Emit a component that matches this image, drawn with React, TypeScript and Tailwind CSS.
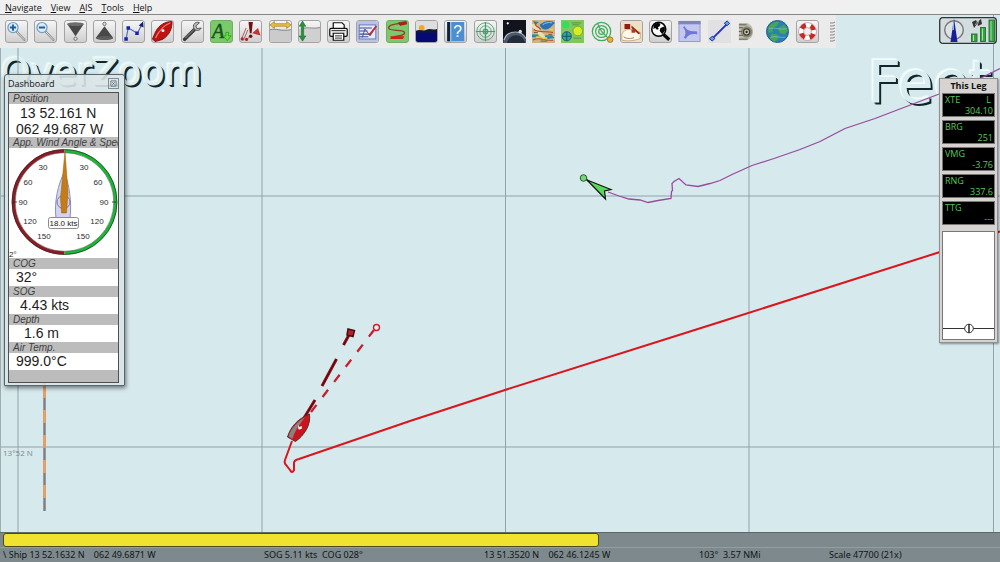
import React from 'react';
import clsx from 'clsx';

type Tone = 'plain' | 'green' | 'bare';

interface Tool {
  label: string;
  tone: Tone;
  art: React.ReactNode;
}

const TONES: Record<Tone, string> = {
  plain: 'rounded-[3px] border border-[#a3a3a3] bg-linear-to-b from-[#f6f6f6] to-[#cfcfcf]',
  green: 'rounded-[3px] border border-[#6fae62] bg-[#7cc96c]',
  bare: '',
};

const lens = (
  <>
    <path d="M12 12 21 21.500" stroke="#8b8b8b" strokeWidth="2.600" strokeLinecap="round" />
    <path d="M12 12 21 21.500" stroke="#e8e8e8" strokeWidth="1" />
    <circle cx="8" cy="7.500" r="5.800" fill="#dcebf5" stroke="#6fa0c6" strokeWidth="1.400" />
  </>
);

const TOOLS: Tool[] = [
  { label: 'Zoom in', tone: 'plain', art: <>{lens}<path d="M8 4v7M4.500 7.500h7" stroke="#1d5f9c" strokeWidth="2.200" /></> },
  { label: 'Zoom out', tone: 'plain', art: <>{lens}<path d="M4.500 7.500h7" stroke="#1d5f9c" strokeWidth="2.400" /></> },
  {
    label: 'Larger scale chart',
    tone: 'plain',
    art: (
      <>
        <path d="M2.500 3.500 12 17.500 21.500 3.500Z" fill="#484848" />
        <ellipse cx="12" cy="3.500" rx="9.500" ry="2.200" fill="#6e6e6e" />
        <circle cx="12" cy="20.300" r="1.900" fill="#ddd" stroke="#666" />
      </>
    ),
  },
  {
    label: 'Smaller scale chart',
    tone: 'plain',
    art: (
      <>
        <path d="M12 6 2 19.500h20Z" fill="#484848" />
        <ellipse cx="12" cy="19.500" rx="10" ry="2.300" fill="#5e5e5e" />
        <circle cx="12" cy="3.300" r="1.900" fill="#ddd" stroke="#666" />
      </>
    ),
  },
  {
    label: 'Create route',
    tone: 'plain',
    art: (
      <>
        <path d="M3.500 20.500 6 8 16.500 14 22 3" fill="none" stroke="#5567c9" strokeWidth="1.300" />
        <path d="m18 5 5-4.500.5 7Z" fill="#16216e" />
        <path d="M1.500 18.500h4v4h-4ZM4 6h4v4H4ZM14 12h4v4h-4Z" fill="#1523a8" />
      </>
    ),
  },
  {
    label: 'Auto follow',
    tone: 'plain',
    art: (
      <>
        <path d="M23 .5C15 .5 8 4.500 4 12.500L.5 20.500l3 3 8.500-2.500C20 16 23 9 23 .5Z" fill="#c11212" stroke="#7b0c0c" />
        <path d="M21 2C14 5 8 11 4 19.500" fill="none" stroke="#e97c74" strokeWidth="1.400" />
        <circle cx="12.500" cy="11" r="1.700" fill="#fff" />
      </>
    ),
  },
  {
    label: 'Options',
    tone: 'plain',
    art: (
      <>
        <path d="M3 21 14 10" stroke="#3c3c3c" strokeWidth="4" strokeLinecap="round" />
        <path d="M4 19.500 14 9.500" stroke="#989898" strokeWidth="1" />
        <path d="M20 2a4.700 4.700 0 1 0 2 6l-4.800.7-1.400-3Z" fill="#b9b9b9" stroke="#505050" />
      </>
    ),
  },
  {
    label: 'Show ENC text',
    tone: 'green',
    art: (
      <>
        <text x="1" y="19" fontSize="23" fontStyle="italic" fontFamily="'Liberation Serif', serif" fill="#17531b" stroke="#17531b" strokeWidth=".6">A</text>
        <path d="M17 13v4h-3l4.500 5.500L23 17h-3v-4Z" fill="#62e03c" stroke="#2d8c1e" strokeWidth=".8" />
      </>
    ),
  },
  {
    label: 'AIS targets',
    tone: 'plain',
    art: (
      <>
        <path d="M7 8 2 20M9 10 4 22M13 16l-5 5" stroke="#9f5151" />
        <path d="M9.700 1h5L13.200 14h-2Z" fill="#701010" />
        <path d="m14 14 6.500-6 3 8.500Z" fill="#c83232" />
        <circle cx="12.200" cy="17.500" r="2" fill="#701010" />
        <circle cx="2.500" cy="20.500" r="1.800" fill="#a62a2a" /><circle cx="7.500" cy="21" r="1.800" fill="#a62a2a" />
      </>
    ),
  },
  {
    label: 'Show currents',
    tone: 'plain',
    art: (
      <>
        <path d="M0 10c7-2 12 2 24 0v14H0Z" fill="#cbcbcb" />
        <path d="M0 10c7-2 12 2 24 0" fill="none" stroke="#777" />
        <path d="m0 4.500 5-4v2.600h14V.5l5 4-5 4V6H5v2.500Z" fill="#e9bd42" stroke="#a8811d" strokeWidth=".8" />
      </>
    ),
  },
  {
    label: 'Show tides',
    tone: 'plain',
    art: (
      <>
        <path d="M0 9c7-2 12 1 24-1v16H0Z" fill="#d0d0d0" />
        <path d="M4 8.500c7-2 12 1 20-1" fill="none" stroke="#777" />
        <path d="m4 0 3.800 6H5.300v11h2.500L4 23 .2 17h2.500V6H.2Z" fill="#27913d" stroke="#156529" strokeWidth=".6" />
      </>
    ),
  },
  {
    label: 'Print chart',
    tone: 'plain',
    art: (
      <g stroke="#111" strokeWidth="1.400">
        <path d="M6 9V2h10l2.500 2.500V9" fill="#fff" />
        <rect x="2" y="8.500" width="20" height="9" rx="1.500" fill="#eee" />
        <path d="M4 11h16" strokeWidth="1" />
        <path d="M6 14h12v8H6Z" fill="#fff" />
        <path d="M8 17h8M8 19.500h8" strokeWidth="1" />
      </g>
    ),
  },
  {
    label: 'Route manager',
    tone: 'plain',
    art: (
      <>
        <rect width="24" height="24" fill="#bac3e4" />
        <rect x="2.500" y="4.500" width="19" height="16" fill="#e5e9f8" stroke="#5b6fb4" />
        <path d="M3 8h14M3 11.500h9M3 15h13M3 18h10" stroke="#3d4c8d" strokeWidth="1.200" />
        <path d="m6 19 3-10 6 8 7-11" fill="none" stroke="#4e4c80" />
        <path d="m14 16 8-10" stroke="#d32222" strokeWidth="2" />
      </>
    ),
  },
  {
    label: 'Track',
    tone: 'green',
    art: (
      <>
        <path d="M17 3C8 3 1 5 2 8.500s17 1 18 4.500-7 4-13 5" fill="none" stroke="#933b2c" strokeWidth="1.500" />
        <path d="m13 2 9-1.500.5 3L15 5Z" fill="#c81818" stroke="#701111" strokeWidth=".6" />
        <path d="M4 17.500h16l-2 3H4Z" fill="#dc1a1a" />
      </>
    ),
  },
  {
    label: 'Day and night colors',
    tone: 'plain',
    art: (
      <>
        <rect width="24" height="24" fill="#dedede" />
        <circle cx="6.500" cy="8" r="3.300" fill="#efaa22" />
        <path d="M0 11c5-2 8 1 12-1s7 1 12-1v14H0Z" fill="#15182c" />
        <path d="M0 13h24v11H0Z" fill="#080a73" />
      </>
    ),
  },
  {
    label: 'Help',
    tone: 'plain',
    art: (
      <>
        <path d="M2.500 1H22v22H2.500Z" fill="#4c8fd0" />
        <path d="M2.500 1H6v22H2.500Z" fill="#11213a" />
        <path d="M6 1h1.200v22H6Z" fill="#b8d6f0" />
        <text x="9.500" y="18" fontSize="18" fontFamily="'Liberation Sans', sans-serif" fill="#fff">?</text>
      </>
    ),
  },
  {
    label: 'Weather',
    tone: 'plain',
    art: (
      <g fill="none" stroke="#45a06c">
        <circle cx="12" cy="12" r="10" /><circle cx="12" cy="12" r="6.500" /><circle cx="12" cy="12" r="2.500" strokeWidth="1.600" />
        <path d="M12 1v22M1 12h22" strokeWidth="1.300" />
      </g>
    ),
  },
  {
    label: 'Celestial navigation',
    tone: 'bare',
    art: (
      <>
        <rect width="24" height="24" fill="#11131d" />
        <path d="M0 24c1-8 7-11 13-11s10 3 11 8v3Z" fill="#4d5868" />
        <path d="M1 21c2-6 7-8.500 12-8.500s9 3 11 7" fill="none" stroke="#aebccb" strokeWidth="1.200" />
        <path d="M4 24c2-6 6-8 10-8s8 3 9 8Z" fill="#252c39" />
        <circle cx="18" cy="12" r="1.800" fill="#fff" opacity=".85" /><circle cx="5" cy="3.500" r="1.200" fill="#fff" />
      </>
    ),
  },
  {
    label: 'Weather fax',
    tone: 'bare',
    art: (
      <>
        <rect width="24" height="24" fill="#cdb487" />
        <path d="M0 4c5 0 6 4 9 8s8 6 15 5v3C14 22 10 19 6 14S2 8 0 8Z" fill="#e9e0b2" />
        <path d="M8 5c5-5 13-5 16-2-2 1-4 6-10 7-3 0-5-2-6-5Z" fill="#2573b5" />
        <path d="M11 5c3-2 6-3 10-2" fill="none" stroke="#9cc8e0" />
        <path d="M0 15h6l2 3H0ZM13 16h8l3 3-9 1ZM1 1l6 1-3 3Z" fill="#2f86a3" />
        <path d="M2 10c6 4 12 1 20 3M1 21c6-4 11 1 21 0M3 2c0 6 5 5 6 8" fill="none" stroke="#b3452e" strokeWidth="1.200" />
        <path d="M11 19h5M18 10h4M4 18h4" stroke="#e8d233" strokeWidth="2" />
        <path d="M2 13h4M9 22h7M17 15h4" stroke="#6a5a3c" />
      </>
    ),
  },
  {
    label: 'Polar',
    tone: 'bare',
    art: (
      <>
        <rect width="24" height="24" fill="#7fc75e" />
        <circle cx="5" cy="5" r="3.600" fill="#2ee05c" />
        <circle cx="17.500" cy="11.500" r="5" fill="#d3ee22" stroke="#87a829" />
        <circle cx="6" cy="17" r="4.800" fill="#35a39b" stroke="#1c616b" />
        <path d="M6 12.500v9M1.500 17h9" stroke="#12506b" />
        <path d="M11 3h10M12 5h7M13 19h8" stroke="#5e9346" />
      </>
    ),
  },
  {
    label: 'Radar',
    tone: 'bare',
    art: (
      <>
        <g fill="none" stroke="#3fae58" strokeWidth="1.300">
          <circle cx="11" cy="12" r="9.600" /><circle cx="11" cy="12" r="6.200" /><circle cx="11" cy="12" r="3" />
        </g>
        <path d="M11 12 7 4M11 12l8 8" stroke="#3fae58" strokeWidth="1.200" />
        <circle cx="20" cy="20.500" r="2.900" fill="#e0b43a" stroke="#9c7b22" />
      </>
    ),
  },
  {
    label: 'Logbook',
    tone: 'plain',
    art: (
      <>
        <rect width="24" height="24" fill="#f1dfc2" />
        <path d="M1 15c4-7 9-6 13-4l8 2v7c-8 3-14 3-21 2Z" fill="#fff8ea" stroke="#b99465" strokeWidth=".8" />
        <path d="M4 3.500h6.500V9H4Z" fill="#8c1f14" />
        <path d="m12 5 10 9-2 1-8-7Z" fill="#7e3315" />
        <path d="M12 9.500h4v4h-4Z" fill="#c2301c" />
        <path d="M3 18c4 3 9 2 12 1" fill="none" stroke="#8d7353" />
      </>
    ),
  },
  {
    label: 'Object search',
    tone: 'plain',
    art: (
      <>
        <path d="m15.500 15.500 6.500 6" stroke="#050505" strokeWidth="3.800" />
        <circle cx="10" cy="9.500" r="8" fill="#fafafa" stroke="#050505" strokeWidth="1.800" />
        <path d="M4 5c3-3 6-3 8-2l-1 3-2 1 1 2-2 1-2-2-2 1ZM12 8l5-2v5l-3 4-3-4Z" fill="#050505" />
      </>
    ),
  },
  {
    label: 'Watchdog',
    tone: 'bare',
    art: (
      <>
        <rect x="1" y="1.500" width="22" height="21" fill="#c4c8ee" stroke="#9298ce" />
        <path d="M.5 1h23v3.500H.5Z" fill="#7d84c2" />
        <path d="M7 6.500c2 5 6 5 13 5.500v3c-5-1-9 0-12 4.500l-2-1c3-4 2-8-1-11Z" fill="#7078d4" />
      </>
    ),
  },
  {
    label: 'Route legs',
    tone: 'bare',
    art: (
      <>
        <rect width="24" height="24" fill="#e1e1e3" />
        <path d="M4 20 20 4" stroke="#2531c4" strokeWidth="2" />
        <path d="m1.500 19.500 3-2.500 2.500 2.500-2.500 2.500ZM17 3.500l3-2.500 2.500 2.500L20 6Z" fill="#5ba4ec" stroke="#1a2c9c" />
      </>
    ),
  },
  {
    label: 'Sound',
    tone: 'bare',
    art: (
      <>
        <path d="M2 3h8c9 2 9 16 0 18H2Z" fill="#bdbcaa" />
        <circle cx="10" cy="12.500" r="6" fill="#8b8978" />
        <circle cx="10" cy="12.500" r="3.200" fill="#d0cebc" stroke="#3f3e34" strokeWidth="1.300" />
        <circle cx="10" cy="12.500" r="1.200" fill="#222" />
        <path d="M2 5h8M2 8h4M2 12h3M2 16h4M2 20h9" stroke="#5f5d50" />
      </>
    ),
  },
  {
    label: 'World map',
    tone: 'bare',
    art: (
      <>
        <circle cx="12" cy="12" r="11.500" fill="#2b7fb4" stroke="#225f7c" />
        <path d="M2.500 8c3-5 8-6.500 11-6l-2 4-4 2-1 5-4 0ZM13 8l6-3 4 6-4 4-4-1-2-3ZM6 14l6 1 1 4-4 4-5-4Z" fill="#47a652" />
        <path d="M3 9c6-2 13 2 19 0M5 18c5-2 10 1 15 0" fill="none" stroke="#6fbfd0" strokeWidth=".8" />
      </>
    ),
  },
  {
    label: 'Man overboard',
    tone: 'plain',
    art: (
      <>
        <circle cx="12" cy="12" r="7.300" fill="none" stroke="#fff" strokeWidth="5.400" />
        <circle cx="12" cy="12" r="7.300" fill="none" stroke="#c62828" strokeWidth="5.400" strokeDasharray="5.733" strokeDashoffset="-2.870" />
        <circle cx="12" cy="12" r="10.200" fill="none" stroke="#b98080" strokeWidth=".7" />
        <circle cx="12" cy="12" r="4.400" fill="#eee" stroke="#b98080" strokeWidth=".7" />
      </>
    ),
  },
];

const MENUS = ['Navigate', 'View', 'AIS', 'Tools', 'Help'];

const LEG_ROWS = [
  { name: 'XTE', side: 'L', value: '304.10' },
  { name: 'BRG', side: '', value: '251' },
  { name: 'VMG', side: '', value: '-3.76' },
  { name: 'RNG', side: '', value: '337.6' },
  { name: 'TTG', side: '', value: '---' },
];

const MenuBar: React.FC = () => (
  <nav className="flex h-[15px] items-center gap-[9px] border-b border-[#858585] bg-[#f0f0f0] pl-[5px] text-[9px] leading-[13px] text-[#111]">
    {MENUS.map(m => (
      <button key={m} className="whitespace-nowrap">
        <span className="underline">{m[0]}</span>{m.slice(1)}
      </button>
    ))}
  </nav>
);

const Toolbar: React.FC = () => (
  <div role="toolbar" className="absolute top-0 left-0 flex items-center bg-[#ebebec] py-[5px] pl-[5px]">
    <div className="flex w-[814px] justify-between">
      {TOOLS.map(t => (
        <button key={t.label} aria-label={t.label} className={clsx('size-[23px] overflow-hidden', TONES[t.tone])}>
          <svg viewBox="0 0 24 24" className="block size-full">{t.art}</svg>
        </button>
      ))}
    </div>
    <svg viewBox="0 0 6 22" className="ml-[11px] h-[22px] w-[6px]">
      <path d="M0 2h3l2-1M0 5h3l2-1M0 8h3l2-1M0 11h3l2-1M0 14h3l2-1M0 17h3l2-1M0 20h3l2-1" fill="none" stroke="#858585" />
    </svg>
  </div>
);

const Chart: React.FC = () => (
  <svg viewBox="0 15 1000 517" preserveAspectRatio="xMidYMid slice" className="absolute inset-0 size-full">
    <path d="M18 15v517M262 15v517M505.500 15v517M749 15v517M993.500 15v517M0 196h1000M0 447h1000" stroke="#8fa3a9" />
    <path d="M.5 15v517" stroke="#a2adb1" />
    <text x="3" y="456" fontSize="8" fill="#7c868a">13°52 N</text>

    {/* bearing marker */}
    <path d="M44.500 380v131" stroke="#7f7f83" strokeWidth="2.500" />
    <path d="M44.500 385v113" stroke="#eda163" strokeWidth="2.500" strokeDasharray="13 12" strokeDashoffset="0" />

    {/* AIS target */}
    <path d="m608 192 11 4 10 3 11 1 8 2.500 10-2 13-2 .5-7 1-1-.5-7 2-2 5-3 7 6.500 12 1.500 12-3 10-3 12-6 20-9 22-7 26-9 20-8 25-13 30-10 55-21 50-19 20-10" fill="none" stroke="#9a4a9d" strokeWidth="1.300" />
    <path d="m584 178 12 8" stroke="#111" strokeWidth="1.500" />
    <circle cx="583.500" cy="178" r="3.300" fill="#75d57a" stroke="#2f5a33" />
    <path d="m587 180 24 9.500-6.500 1.500 1 8Z" fill="#5ad85a" stroke="#111" strokeWidth="1.200" />

    {/* own track */}
    <path d="M1000 231.500 940 252 720 322 505 390 410 421 299 459q-5 1-5 4l0 7q-2 4-4 0l-4-5q-2-2-1-5l7-19" fill="none" stroke="#dc141b" strokeWidth="2" />
    <path d="M311 412 374 330" stroke="#c6202c" strokeWidth="2.300" strokeDasharray="9 10" />
    <circle cx="376.500" cy="327.500" r="3" fill="#e8eff0" stroke="#c6202c" strokeWidth="1.400" />
    <path d="m304 418 11-18M322 386l14.500-27M343.500 345l6-11" stroke="#971019" strokeWidth="3" />
    <path d="m304 418 11-18M322 386l14.500-27M343.500 345l6-11" stroke="#3d0b0e" />
    <path d="m348 329 6.500 1.500-1.500 6-6-1.500Z" fill="#b5202c" stroke="#4b0b10" strokeWidth="1.500" />
    <path d="M309.500 414c1.500 11-5 21-14 27.500L287.500 437c3-10 10-18 22-23Z" fill="#c9161e" stroke="#5b2a2a" />
    <path d="M305 417c-8 5-14 11-16.500 19.500l4 2.500C295 430 300 424 305 417Z" fill="#8f7f7d" />
    <path d="m298 425 1.500 2 2.500-1-.5 3-3 .5Z" fill="#fff" />
  </svg>
);

const DashLabel: React.FC<{ children: React.ReactNode }> = ({ children }) => (
  <dt className="h-[11px] overflow-hidden bg-[#bcbcbc] pl-1 text-[10px] leading-[11px] whitespace-nowrap text-[#404040] italic">{children}</dt>
);

const DashValue: React.FC<{ children: React.ReactNode; pad?: string }> = ({ children, pad = 'pl-[7px]' }) => (
  <dd className={clsx('h-[17px] bg-white text-[14px] leading-[17px] whitespace-nowrap', pad)}>{children}</dd>
);

const DIAL = [
  [35, 22, '30'], [76, 22, '30'], [20, 37, '60'], [90, 37, '60'], [15, 57, '90'],
  [96, 57, '90'], [22, 76, '120'], [89, 76, '120'], [36, 91, '150'], [75, 91, '150'],
] as const;

const WindDial: React.FC = () => (
  <svg viewBox="1 0 109 110" className="block w-full bg-white">
    <path d="M56.500 3a51 51 0 0 0 0 102" fill="none" stroke="#8f1a24" strokeWidth="3.400" />
    <path d="M56.500 3a51 51 0 0 1 0 102" fill="none" stroke="#18b834" strokeWidth="3.400" />
    <circle cx="56.500" cy="54" r="52.500" fill="none" stroke="#2c2c2c" strokeWidth=".7" />
    <circle cx="56.500" cy="54" r="49.300" fill="none" stroke="#444" strokeWidth=".5" />
    <path d="M5 54h4M104 54h4" stroke="#222" strokeWidth=".8" />
    <g fontSize="8" textAnchor="middle" fill="#2b2b2b">
      {DIAL.map(([x, y, t]) => <text key={`${x}-${y}`} x={x} y={y}>{t}</text>)}
    </g>
    <path d="M56.500 24C50 36 46 54 48 70h14c2-16-1-34-5.500-46Z" fill="#d5d4f0" stroke="#8c8cc0" />
    <circle cx="55.500" cy="54" r="6.500" fill="none" stroke="#7676a5" />
    <path d="M57 3 60 45 58.500 65h-5L52.500 50Z" fill="#c47d16" stroke="#9a6112" strokeWidth=".5" />
    <rect x="40.500" y="69.500" width="30" height="11" rx="2" fill="#fbfbfb" stroke="#8c8c8c" />
    <text x="55.500" y="78" fontSize="8" textAnchor="middle" fill="#222">18.0 kts</text>
    <text x="1" y="109" fontSize="8" fill="#222">2°</text>
  </svg>
);

const Dashboard: React.FC = () => (
  <section className="absolute top-[59px] left-[4px] w-[121px] rounded-t-[3px] border border-[#56666c] bg-[#d9e4e6]/90 pr-[5px] pb-[2px] pl-[3px] shadow-[1px_2px_4px_rgba(0,0,0,0.5)]">
    <header className="flex h-[17px] items-center justify-between text-[9px] text-[#111]">
      <h2>Dashboard</h2>
      <button aria-label="Close dashboard" className="flex h-[11px] w-[11px] items-center justify-center border border-[#7e8d93]">
        <svg viewBox="0 0 8 8" className="size-[7px]">
          <path d="M1 1h6v6H1ZM2.500 2.500l3 3M5.500 2.500l-3 3" fill="none" stroke="#46555b" strokeWidth=".8" />
        </svg>
      </button>
    </header>
    <dl className="border border-[#4f4f4f] bg-[#bcbcbc] pb-3 font-['Liberation_Sans',Arial,sans-serif] text-[#1c1c1c]">
      <DashLabel>Position</DashLabel>
      <dd className="bg-white pt-[1px] text-[14px] leading-[16px] whitespace-nowrap">
        <p className="pl-[11px]">13 52.161 N</p>
        <p className="pl-[7px]">062 49.687 W</p>
      </dd>
      <DashLabel>App. Wind Angle &amp; Spee</DashLabel>
      <dd><WindDial /></dd>
      <DashLabel>COG</DashLabel>
      <DashValue>32°</DashValue>
      <DashLabel>SOG</DashLabel>
      <DashValue pad="pl-[11px]">4.43 kts</DashValue>
      <DashLabel>Depth</DashLabel>
      <DashValue pad="pl-[15px]">1.6 m</DashValue>
      <DashLabel>Air Temp.</DashLabel>
      <DashValue>999.0°C</DashValue>
    </dl>
  </section>
);

const LegPanel: React.FC = () => (
  <section className="absolute top-[63px] right-[2px] w-[59px] border border-[#8f8f8f] bg-[#d6d3d0] px-[2px] pb-[2px] shadow-[1px_1px_2px_rgba(0,0,0,0.4)]">
    <h2 className="text-center text-[9px] leading-[14px] font-bold text-[#111]">This Leg</h2>
    <dl className="flex flex-col gap-[3px]">
      {LEG_ROWS.map(r => (
        <div key={r.name} className="border border-[#777] bg-black pr-px pl-[2px] text-[9px] leading-[11px] text-[#56c85c]">
          <dt className="flex justify-between pr-[2px]"><span>{r.name}</span><span>{r.side}</span></dt>
          <dd className="text-right">{r.value}</dd>
        </div>
      ))}
    </dl>
    <svg viewBox="0 0 51 107" className="mt-[6px] block w-full border border-[#777] bg-white">
      <path d="M0 96.500h51" stroke="#333" />
      <circle cx="26" cy="96.500" r="4.300" fill="#fff" stroke="#333" />
      <path d="M26 92v9" stroke="#333" strokeWidth="1.600" />
    </svg>
  </section>
);

const StatusWidget: React.FC = () => (
  <svg viewBox="0 0 58 27" className="absolute top-[2px] right-[3px] h-[27px] w-[58px]">
    <rect x=".7" y=".7" width="56.600" height="25.600" rx="3" fill="#d3dcde" stroke="#333" strokeWidth="1.300" />
    <circle cx="15" cy="13" r="9.300" fill="#dce2e5" stroke="#777" strokeWidth="1.400" />
    <path d="M15 1.500 11.500 25h7Z" fill="#16209a" />
    <path d="M15 1.500V13h-2Z" fill="#9aa7dc" />
    <g stroke="#2c6b34" fill="#35a542" strokeWidth=".9">
      <rect x="32.500" y="17" width="5.500" height="7.500" /><rect x="41.500" y="10.500" width="5" height="14" /><rect x="50" y="3" width="5.500" height="21.500" />
    </g>
    <path d="M34.500 18v6M43.500 11.500v12M52 4v19.500" stroke="#a5e3a6" />
    <path d="m33 5 4-2 1 2 4-3 1 5-4 2-1-2-3 4Z" fill="#333" />
    <path d="m36 8 3-4M40 3l-2 6" stroke="#ccc" strokeWidth=".7" />
  </svg>
);

const App: React.FC = () => (
  <div className="flex min-h-screen flex-col bg-[#f0f0f0] font-['Open_Sans','Noto_Sans',sans-serif]">
    <MenuBar />
    <main className="relative min-h-[420px] flex-1 overflow-hidden bg-[#d6e9ed]">
      <p className="absolute top-[35px] left-[1px] font-['DejaVu_Sans',sans-serif] text-[38px] leading-[44px] text-[#dceef0] [text-shadow:-1px_-1px_0_#eefafb,-2px_-2px_1px_#e8f7f9,1px_1px_0_#12262c,2px_2px_0_#12262c]">OverZoom</p>
      <p className="absolute top-[36px] right-[8px] font-['DejaVu_Sans',sans-serif] text-[58px] leading-[64px] text-[#d9ecef] [text-shadow:-1px_-1px_0_#f4fdfe,-2px_-2px_1px_#eefafb,1px_1px_0_#12262c,2px_2px_0_#12262c]">Feet</p>
      <Chart />
      <Toolbar />
      <Dashboard />
      <StatusWidget />
      <LegPanel />
    </main>
    <footer className="bg-[#7e898d] font-['Noto_Sans',sans-serif] text-[9px] text-[#101516]">
      <div className="border-y border-t-[#5f6768] border-b-[#929ea2] pr-[4px] pl-[3px]">
        <button aria-label="Current chart" className="block h-[14px] w-[60%] rounded-[3px] border border-[#4c4a16] bg-[#efe32f]" />
      </div>
      <div className="grid grid-cols-[261fr_220fr_215fr_130fr_171fr] pl-[3px] leading-[14px] whitespace-pre">
        <span>{'\\ Ship 13 52.1632 N    062 49.6871 W'}</span>
        <span>{'SOG 5.11 kts  COG 028°'}</span>
        <span>{'13 51.3520 N    062 46.1245 W'}</span>
        <span>{'103°  3.57 NMi'}</span>
        <span>Scale 47700 (21x)</span>
      </div>
    </footer>
  </div>
);

export default App;
